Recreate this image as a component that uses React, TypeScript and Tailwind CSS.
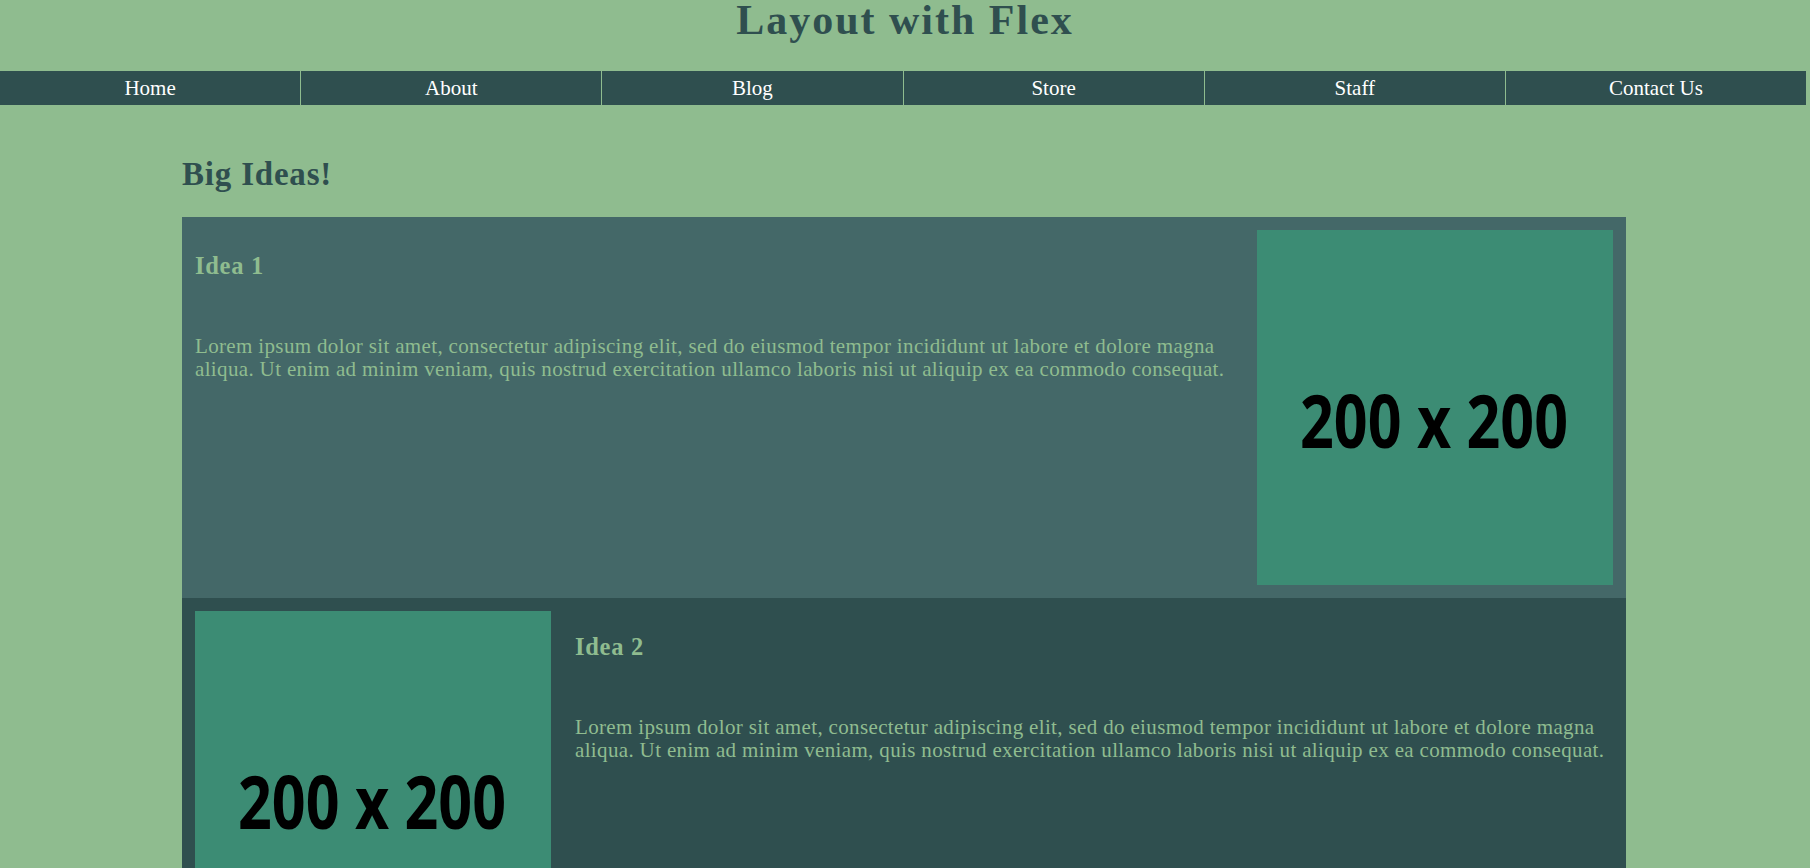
import React from "react";

const navItems = ["Home", "About", "Blog", "Store", "Staff", "Contact Us"];

const lorem =
  "Lorem ipsum dolor sit amet, consectetur adipiscing elit, sed do eiusmod tempor incididunt ut labore et dolore magna aliqua. Ut enim ad minim veniam, quis nostrud exercitation ullamco laboris nisi ut aliquip ex ea commodo consequat.";

function Placeholder() {
  return (
    <div className="w-[356px] h-[355px] shrink-0 bg-[#3c8c74]">
      <svg width="356" height="355" viewBox="0 0 356 355" className="block">
        <text
          x="43"
          y="218"
          textLength="268"
          lengthAdjust="spacingAndGlyphs"
          fontSize="74"
          fontWeight="700"
          fontFamily="'Open Sans', 'DejaVu Sans', sans-serif"
          fill="#000000"
        >
          200 x 200
        </text>
      </svg>
    </div>
  );
}

function IdeaText({ title }: { title: string }) {
  return (
    <div className="flex-1 min-w-0 text-[#8fbc8f]">
      <h3 className="mt-[22px] text-[24.5px] leading-[28px] font-bold tracking-[0.7px]">{title}</h3>
      <p className="mt-[55px] text-[21px] leading-[22.5px] tracking-[0.35px]">{lorem}</p>
    </div>
  );
}

export default function App() {
  return (
    <div
      className="min-h-[868px] w-full bg-[#8fbc8f] overflow-hidden"
      style={{ fontFamily: "'Liberation Serif', 'Times New Roman', serif" }}
    >
      <h1 className="text-center text-[42px] leading-[40px] font-bold tracking-[2px] text-[#2f4f4f]">
        Layout with Flex
      </h1>

      <nav className="mt-[31px] w-[1806px] h-[34px] bg-[#2f4f4f] flex">
        {navItems.map((item, i) => (
          <div
            key={item}
            className={
              i === 0
                ? "flex-1 text-center text-white text-[21px] leading-[34px]"
                : "flex-1 text-center text-white text-[21px] leading-[34px] border-l border-[#8fbc8f]"
            }
          >
            {item}
          </div>
        ))}
      </nav>

      <main className="ml-[182px] w-[1444px]">
        <h2 className="mt-[51px] text-[33px] leading-[36px] font-bold tracking-[0.8px] text-[#2f4f4f]">
          Big Ideas!
        </h2>

        <section className="mt-[25px]">
          <article className="flex gap-[25px] p-[13px] bg-[#446868]">
            <IdeaText title="Idea 1" />
            <Placeholder />
          </article>
          <article className="flex gap-[24px] p-[13px] bg-[#2f4f4f]">
            <Placeholder />
            <IdeaText title="Idea 2" />
          </article>
        </section>
      </main>
    </div>
  );
}
